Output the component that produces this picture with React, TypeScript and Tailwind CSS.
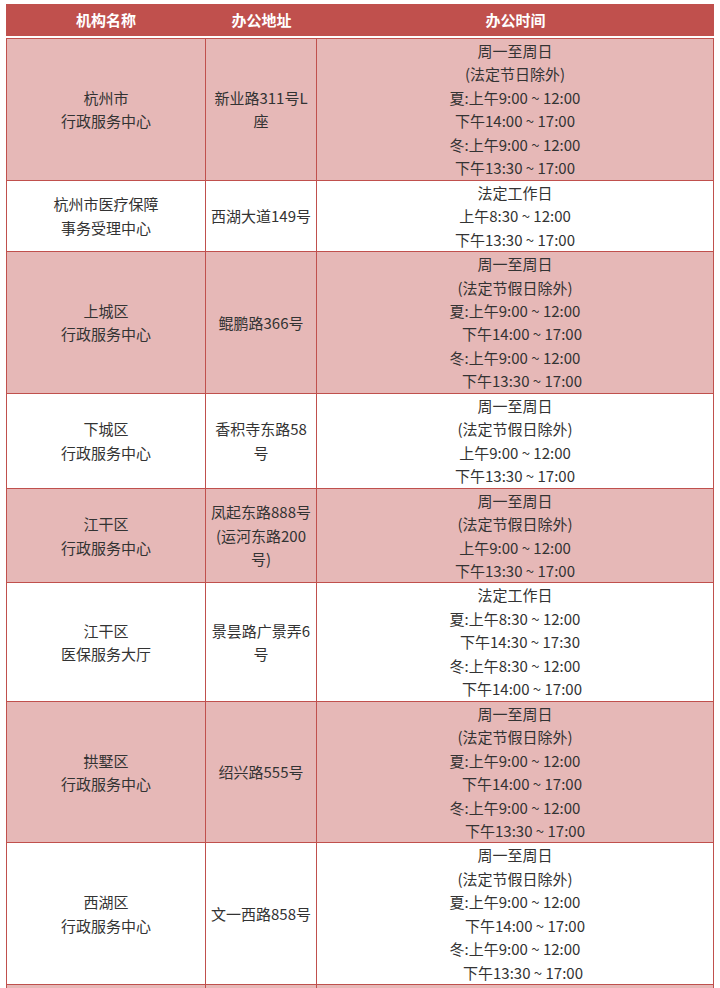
type Line = { text: string; cls?: string };

type Row = {
  name: string[];
  addr: string[];
  hours: Line[];
  pink: boolean;
};

const L = (text: string, cls?: string): Line => ({ text, cls });

const rows: Row[] = [
  {
    name: ["杭州市", "行政服务中心"],
    addr: ["新业路311号L", "座"],
    hours: [
      L("周一至周日"),
      L("(法定节日除外)"),
      L("夏:上午9:00 ~ 12:00"),
      L("下午14:00 ~ 17:00"),
      L("冬:上午9:00 ~ 12:00"),
      L("下午13:30 ~ 17:00"),
    ],
    pink: true,
  },
  {
    name: ["杭州市医疗保障", "事务受理中心"],
    addr: ["西湖大道149号"],
    hours: [L("法定工作日"), L("上午8:30 ~ 12:00"), L("下午13:30 ~ 17:00")],
    pink: false,
  },
  {
    name: ["上城区", "行政服务中心"],
    addr: ["鲲鹏路366号"],
    hours: [
      L("周一至周日"),
      L("(法定节假日除外)"),
      L("夏:上午9:00 ~ 12:00"),
      L("下午14:00 ~ 17:00", "pl-[14px]"),
      L("冬:上午9:00 ~ 12:00"),
      L("下午13:30 ~ 17:00", "pl-[14px]"),
    ],
    pink: true,
  },
  {
    name: ["下城区", "行政服务中心"],
    addr: ["香积寺东路58", "号"],
    hours: [
      L("周一至周日"),
      L("(法定节假日除外)"),
      L("上午9:00 ~ 12:00"),
      L("下午13:30 ~ 17:00"),
    ],
    pink: false,
  },
  {
    name: ["江干区", "行政服务中心"],
    addr: ["凤起东路888号", "(运河东路200", "号)"],
    hours: [
      L("周一至周日"),
      L("(法定节假日除外)"),
      L("上午9:00 ~ 12:00"),
      L("下午13:30 ~ 17:00"),
    ],
    pink: true,
  },
  {
    name: ["江干区", "医保服务大厅"],
    addr: ["景昙路广景弄6", "号"],
    hours: [
      L("法定工作日"),
      L("夏:上午8:30 ~ 12:00"),
      L("下午14:30 ~ 17:30", "pl-[10px]"),
      L("冬:上午8:30 ~ 12:00"),
      L("下午14:00 ~ 17:00", "pl-[14px]"),
    ],
    pink: false,
  },
  {
    name: ["拱墅区", "行政服务中心"],
    addr: ["绍兴路555号"],
    hours: [
      L("周一至周日"),
      L("(法定节假日除外)"),
      L("夏:上午9:00 ~ 12:00"),
      L("下午14:00 ~ 17:00", "pl-[14px]"),
      L("冬:上午9:00 ~ 12:00"),
      L("下午13:30 ~ 17:00", "pl-[20px]"),
    ],
    pink: true,
  },
  {
    name: ["西湖区", "行政服务中心"],
    addr: ["文一西路858号"],
    hours: [
      L("周一至周日"),
      L("(法定节假日除外)"),
      L("夏:上午9:00 ~ 12:00"),
      L("下午14:00 ~ 17:00", "pl-[20px]"),
      L("冬:上午9:00 ~ 12:00"),
      L("下午13:30 ~ 17:00", "pl-[16px]"),
    ],
    pink: false,
  },
];

const cell = "flex flex-col items-center justify-center border-r border-b border-[#c0504d] text-center whitespace-nowrap";
const cols = "grid grid-cols-[200px_111px_397px]";

export default function App() {
  return (
    <div
      className="w-[720px] h-[988px] overflow-hidden bg-white pt-[4px] px-[6px] text-[15px] text-[#333]"
      style={{ fontFamily: '"Microsoft YaHei", "Noto Sans CJK SC", "Noto Sans", sans-serif' }}
    >
      <div className="w-[708px]">
        <div className={`${cols} h-[32px] bg-[#c0504d] text-white font-bold`}>
          <div className="flex items-center justify-center">机构名称</div>
          <div className="flex items-center justify-center">办公地址</div>
          <div className="flex items-center justify-center">办公时间</div>
        </div>

        <div className="mt-[2px] border-t border-[#c0504d] leading-[23.45px]">
          {rows.map((r, i) => (
            <div key={i} className={`${cols} ${r.pink ? "bg-[#e6b8b7]" : "bg-white"}`}>
              <div className={`${cell} border-l`}>
                {r.name.map((t) => (
                  <div key={t}>{t}</div>
                ))}
              </div>
              <div className={cell}>
                {r.addr.map((t) => (
                  <div key={t}>{t}</div>
                ))}
              </div>
              <div className={cell}>
                {r.hours.map((h, j) => (
                  <div key={j} className={h.cls}>
                    {h.text}
                  </div>
                ))}
              </div>
            </div>
          ))}
          {/* next row, cut off by the bottom edge */}
          <div className={`${cols} h-[40px] bg-[#e6b8b7]`}>
            <div className={`${cell} border-l`} />
            <div className={cell} />
            <div className={cell} />
          </div>
        </div>
      </div>
    </div>
  );
}
